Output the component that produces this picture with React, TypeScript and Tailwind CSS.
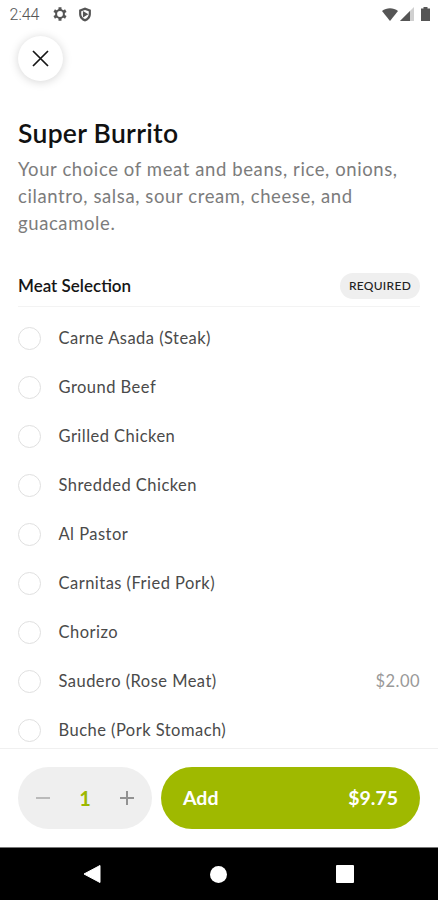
import { useState } from "react";

type Option = {
  id: string;
  name: string;
  price?: string;
};

const MEAT_OPTIONS: Option[] = [
  { id: "carne-asada", name: "Carne Asada (Steak)" },
  { id: "ground-beef", name: "Ground Beef" },
  { id: "grilled-chicken", name: "Grilled Chicken" },
  { id: "shredded-chicken", name: "Shredded Chicken" },
  { id: "al-pastor", name: "Al Pastor" },
  { id: "carnitas", name: "Carnitas (Fried Pork)" },
  { id: "chorizo", name: "Chorizo" },
  { id: "saudero", name: "Saudero (Rose Meat)", price: "$2.00" },
  { id: "buche", name: "Buche (Pork Stomach)" },
];

const UNIT_PRICE = 9.75;

export default function App() {
  const [selected, setSelected] = useState<string | null>(null);
  const [quantity, setQuantity] = useState(1);

  return (
    <div className="flex h-[900px] w-[438px] flex-col overflow-hidden bg-white font-['Lato',sans-serif]">
      <StatusBar />

      <main className="min-h-0 flex-1 overflow-hidden px-[18px] pt-2">
        <button
          type="button"
          aria-label="Close"
          className="flex size-[45px] items-center justify-center rounded-full bg-white shadow-[0_1px_10px_rgba(0,0,0,0.17)]"
        >
          <svg viewBox="0 0 17 17" className="size-[17px]" fill="none" stroke="#151515" strokeWidth="1.7">
            <path d="M1 1 16 16M16 1 1 16" />
          </svg>
        </button>

        <h1 className="mt-[36px] text-[26.5px] leading-[32px] font-semibold tracking-[0.28px] text-[#111]">
          Super Burrito
        </h1>
        <p className="mt-[7px] w-[402px] text-[18.5px] leading-[27px] tracking-[0.6px] text-[#7c7c7c]">
          Your choice of meat and beans, rice, onions, cilantro, salsa, sour cream, cheese, and guacamole.
        </p>

        <div className="mt-[36px] flex h-[34px] items-start justify-between border-b border-[#f3f3f3]">
          <h2 className="text-[17px] leading-[25px] font-semibold text-[#161616]">Meat Selection</h2>
          <span className="flex h-[26px] w-[80px] items-center justify-center rounded-full bg-[#efefef] text-[12px] font-medium tracking-[0.3px] text-[#222]">
            REQUIRED
          </span>
        </div>

        <ul className="mt-[7px]">
          {MEAT_OPTIONS.map((option) => (
            <OptionRow
              key={option.id}
              option={option}
              checked={selected === option.id}
              onSelect={setSelected}
            />
          ))}
        </ul>
      </main>

      {/* Cart bar */}
      <footer className="flex h-[99px] shrink-0 gap-[9px] border-t border-[#f0f0f0] bg-white px-[18px] pt-[18px]">
        <div className="flex h-[62px] w-[134px] items-center justify-between rounded-full bg-[#efefef] px-[18px]">
          <button
            type="button"
            aria-label="Remove one"
            onClick={() => setQuantity((q) => Math.max(1, q - 1))}
          >
            <svg viewBox="0 0 14 14" className="size-[14px]" stroke="#b4b4b4" strokeWidth="1.8">
              <path d="M0 7H14" />
            </svg>
          </button>
          <span className="text-[20px] font-bold text-[#9cb800]">{quantity}</span>
          <button type="button" aria-label="Add one" onClick={() => setQuantity((q) => q + 1)}>
            <svg viewBox="0 0 14 14" className="size-[14px]" stroke="#929292" strokeWidth="2">
              <path d="M0 7H14M7 0V14" />
            </svg>
          </button>
        </div>
        <button
          type="button"
          className="flex h-[62px] flex-1 items-center justify-between rounded-full bg-[#9fb900] px-[22px] text-[19.5px] font-bold text-white"
        >
          <span>Add</span>
          <span>${(UNIT_PRICE * quantity).toFixed(2)}</span>
        </button>
      </footer>

      <NavigationBar />
    </div>
  );
}

function OptionRow({
  option,
  checked,
  onSelect,
}: {
  option: Option;
  checked: boolean;
  onSelect: (id: string) => void;
}) {
  return (
    <li
      className="flex h-[49px] items-center text-[16.5px] tracking-[0.47px]"
      onClick={() => onSelect(option.id)}
    >
      <span className="flex size-[23px] items-center justify-center rounded-full border-[1.5px] border-[#e0e0e0]">
        {checked ? <span className="size-[11px] rounded-full bg-[#9fb900]" /> : null}
      </span>
      <span className="ml-[17.5px] flex-1 text-[#4a4a4a]">{option.name}</span>
      {option.price ? <span className="text-[#999]">{option.price}</span> : null}
    </li>
  );
}

function StatusBar() {
  return (
    <header className="flex h-[28px] shrink-0 items-center pr-[8px] pl-[9.5px] text-[#555]">
      <span className="pt-px font-['Roboto',sans-serif] text-[16px] font-light text-[#555]">2:44</span>
      {/* Settings gear */}
      <svg viewBox="0 0 14 14" className="ml-[13.5px] size-[14px]" fill="none" stroke="#555">
        <circle cx="7" cy="7" r="3.9" strokeWidth="2" />
        <path d="M7 .3V3M7 11V13.700M1.200 3.650 3.500 5M10.500 9 12.800 10.350M1.200 10.350 3.500 9M10.500 5 12.800 3.650" strokeWidth="3" />
      </svg>
      <svg viewBox="0 0 14 16" className="ml-[11px] h-[15px] w-[14px]" fill="currentColor">
        <path
          fillRule="evenodd"
          d="M7 .5 13.300 2.800V7.500C13.300 11.300 10.700 14.400 7 15.500 3.300 14.400.7 11.300.7 7.500V2.800zM7 3.200 3 4.600V7.500c0 2.400 1.600 4.500 4 5.400 2.400-.9 4-3 4-5.400V4.600z"
        />
        <path d="M4.800 4.200 10.500 7.700 4.800 11.200z" />
      </svg>

      <div className="ml-auto flex items-center">
        <svg viewBox="0 0 16 13" className="h-[13px] w-[16px]" fill="currentColor">
          <path d="M0 3C4.600-.8 11.400-.8 16 3L8 13z" />
        </svg>
        {/* Signal: filled part over the faint full triangle */}
        <svg viewBox="0 0 14 14" className="ml-[2px] size-[14px]">
          <path d="M14 0V14H0z" fill="#d0d0d0" />
          <path d="M10 4V14H0z" fill="#555" />
        </svg>
        <svg viewBox="0 0 9 14" className="ml-[7px] h-[14px] w-[9px]" fill="currentColor">
          <path d="M2.500 0h4v1.500H9V14H0V1.500h2.500z" />
        </svg>
      </div>
    </header>
  );
}

function NavigationBar() {
  return (
    <nav className="flex h-[53px] shrink-0 items-center justify-between border-t border-[#777] bg-black pr-[84px] pl-[83px]">
      <svg viewBox="0 0 18 20" className="h-[20px] w-[18px]" fill="#fff">
        <path d="M17 1.500v17L1 10z" stroke="#fff" strokeLinejoin="round" />
      </svg>
      <span className="size-[17px] rounded-full bg-white" />
      <span className="size-[18px] rounded-[1px] bg-white" />
    </nav>
  );
}
